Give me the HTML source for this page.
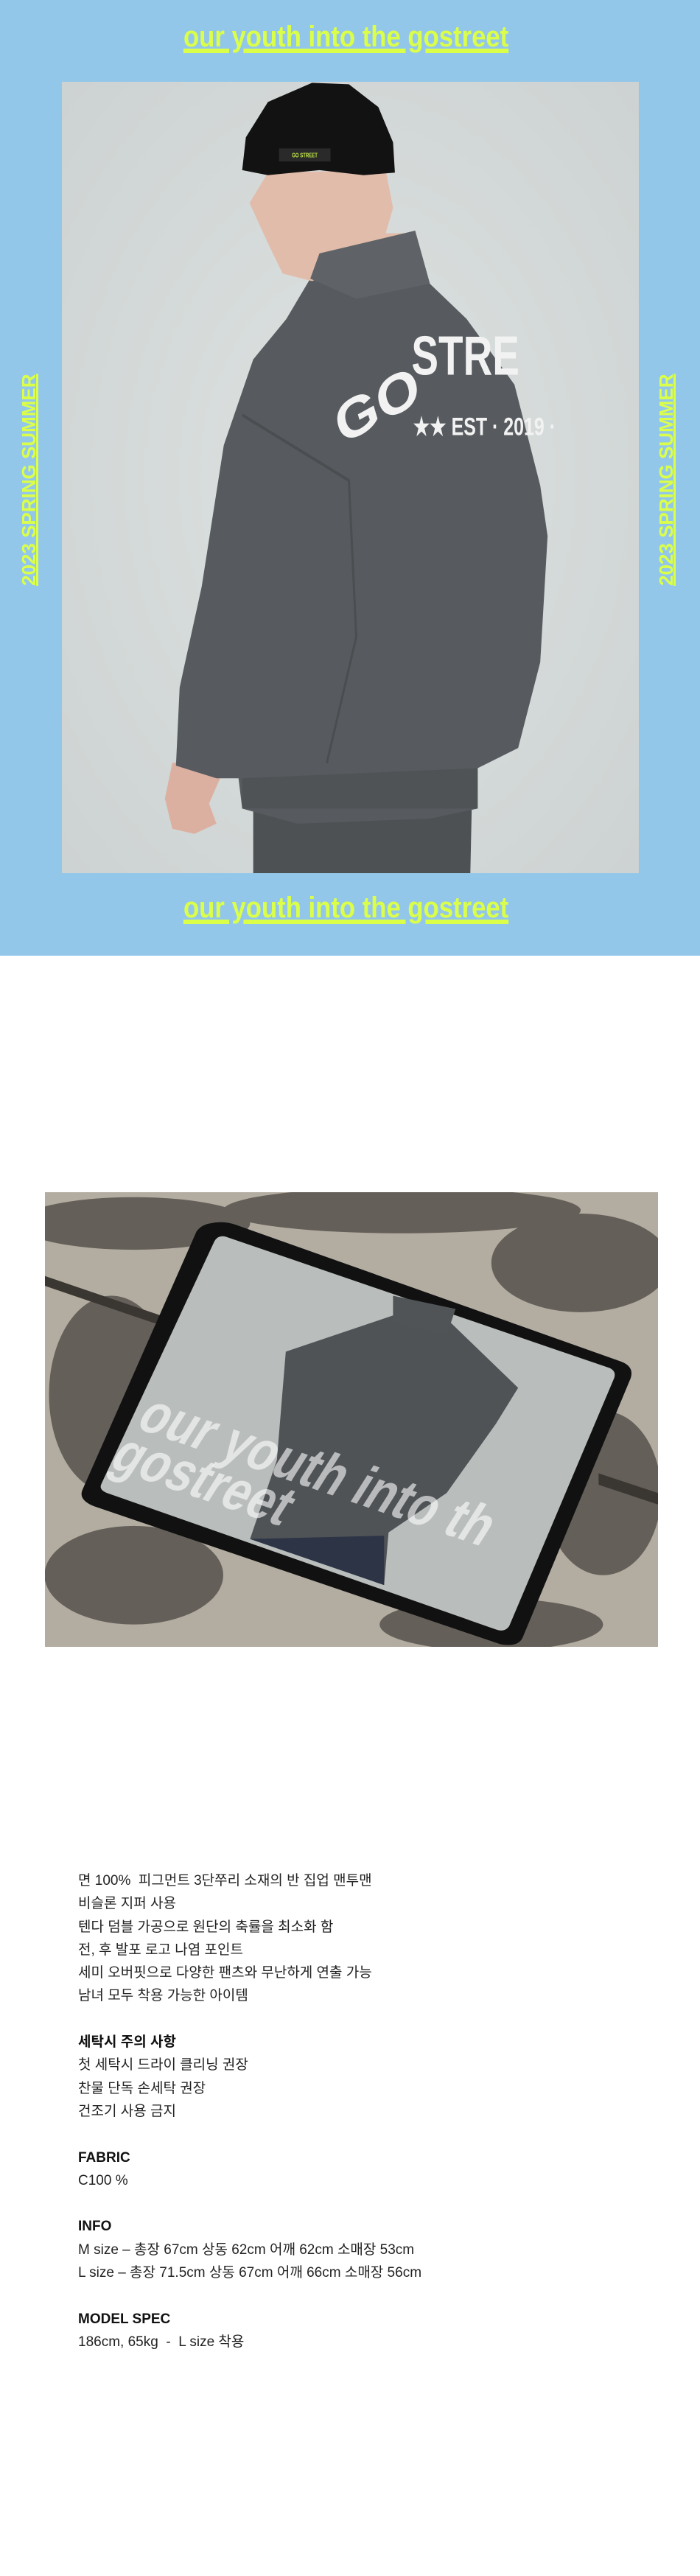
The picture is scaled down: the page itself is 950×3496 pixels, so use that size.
<!DOCTYPE html>
<html><head><meta charset="utf-8">
<style>
*{margin:0;padding:0;box-sizing:border-box}
html,body{width:950px;height:3496px;background:#fff;overflow:hidden;position:relative;font-family:"Liberation Sans","Noto Sans CJK KR",sans-serif}
.blue{position:absolute;left:0;top:0;width:950px;height:1297px;background:#93c7ea}
.slogan{position:absolute;left:249px;font-family:"Liberation Sans",sans-serif;font-weight:bold;font-size:40px;line-height:40px;color:#dbff48;white-space:nowrap;text-decoration:underline;text-decoration-thickness:6px;text-underline-offset:3px;transform-origin:0 0;transform:scaleX(0.867)}
.side{position:absolute;font-weight:bold;font-size:26px;line-height:26px;color:#dbff48;white-space:nowrap;text-decoration:underline;text-decoration-thickness:3px;text-underline-offset:1px;transform-origin:0 0;transform:rotate(-90deg)}
.photo{position:absolute;left:84px;top:111px;width:783px;height:1074px;background:#d3d8d8}
.tab{position:absolute;left:61px;top:1618px;width:832px;height:617px}
.txt{position:absolute;left:106px;top:2537px;font-size:19px;line-height:31.3px;color:#222;white-space:pre}
.txt b{font-weight:bold;color:#111}
</style></head><body>
<div class="blue"></div>
<div class="slogan" style="top:30px">our youth into the gostreet</div>
<div class="slogan" style="top:1212px">our youth into the gostreet</div>
<div class="side" style="left:26px;top:795px">2023 SPRING SUMMER</div>
<div class="side" style="left:891px;top:795px">2023 SPRING SUMMER</div>

<div class="photo">
<svg width="783" height="1074" viewBox="0 0 1568 1568" preserveAspectRatio="none">
<defs><radialGradient id="bg" cx="0.5" cy="0.5" r="0.7"><stop offset="0" stop-color="#dde2e1"/><stop offset="1" stop-color="#cdd2d2"/></radialGradient></defs>
<rect width="1568" height="1568" fill="url(#bg)"/>
<path d="M300 1350 L280 1420 L300 1480 L360 1490 L420 1470 L400 1430 L430 1380 L360 1340Z" fill="#dcb0a0"/>
<path d="M520 1400 L1115 1400 L1110 1568 L520 1568Z" fill="#4d5154"/>
<path d="M675 390 L960 295 L1000 400 L1100 470 L1230 600 L1300 800 L1320 900 L1300 1150 L1240 1320 L1130 1360 L1130 1440 L1000 1460 L640 1470 L490 1440 L480 1380 L420 1380 L310 1355 L320 1200 L380 1000 L440 720 L520 550 L610 470Z" fill="#575b5f"/>
<path d="M490 660 L780 790 L800 1100 L720 1350" fill="none" stroke="#4a4e51" stroke-width="6"/>
<path d="M490 1380 L1130 1360 L1130 1440 L490 1440Z" fill="#4f5356"/>
<path d="M560 180 L880 175 L900 250 L880 300 L960 300 L800 360 L680 395 L600 380 L560 320 L510 240Z" fill="#e2bcaa"/>
<path d="M960 295 L1000 400 L800 430 L675 390 L700 340Z" fill="#5f6367"/>
<path d="M490 175 L500 110 L560 40 L680 2 L780 5 L860 50 L900 120 L905 180 L820 185 L700 175 L560 185Z" fill="#121212"/>
<rect x="590" y="132" width="140" height="26" fill="#2a2a2a"/>
<text x="660" y="150" font-size="12" font-family="Liberation Sans" font-weight="bold" fill="#c8f048" text-anchor="middle">GO STREET</text>
<text x="0" y="0" font-family="Liberation Sans" font-weight="bold" font-size="110" fill="#f2f2f2" transform="translate(760 720) rotate(-22) scale(1.4 1)">GO</text>
<text x="950" y="580" font-family="Liberation Sans" font-weight="bold" font-size="110" fill="#f2f2f2">STRE</text>
<text x="955" y="700" font-family="Liberation Sans" font-weight="bold" font-size="50" fill="#f2f2f2">★★ EST · 2019 ·</text>
</svg>
</div>

<div class="tab">
<svg width="832" height="617" viewBox="101 85 1372 1383" preserveAspectRatio="none">
<rect x="101" y="85" width="1372" height="1383" fill="#b3aca1"/>
<g fill="#4a4641" opacity="0.75">
<ellipse cx="300" cy="180" rx="260" ry="80"/>
<ellipse cx="900" cy="140" rx="400" ry="70"/>
<ellipse cx="1300" cy="300" rx="200" ry="150"/>
<ellipse cx="250" cy="700" rx="140" ry="300"/>
<ellipse cx="1350" cy="1000" rx="130" ry="250"/>
<ellipse cx="300" cy="1250" rx="200" ry="150"/>
<ellipse cx="1100" cy="1400" rx="250" ry="80"/>
</g>
<path d="M101 340 L360 460 L360 490 L101 370Z" fill="#3a3631"/>
<path d="M1340 940 L1473 1000 L1473 1035 L1340 975Z" fill="#3a3631"/>
<path d="M470 180 Q500 170 530 185 L1390 600 Q1420 615 1412 650 L1170 1440 Q1160 1470 1120 1460 L210 1040 Q175 1020 185 990 L440 205 Q450 185 470 180Z" fill="#111"/>
<path d="M505 220 L1365 620 Q1380 630 1375 650 L1140 1405 Q1130 1425 1110 1415 L240 1000 Q220 990 228 970 L480 235 Q488 215 505 220Z" fill="#b9bdbc"/>
<path d="M640 570 L880 460 L1000 470 L1160 680 L1110 790 L1000 1000 L870 1120 L860 1280 L560 1140 L620 900Z" fill="#4f5356"/>
<path d="M860 1130 L560 1140 L860 1280Z" fill="#2c3446"/>
<path d="M880 400 L1020 440 L1000 520 L880 480Z" fill="#505457"/>
<text font-family="Liberation Sans" font-weight="bold" font-size="120" fill="#fff" fill-opacity="0.6" transform="translate(300 800) rotate(25) scale(0.9 1.4)">our youth into th</text>
<text font-family="Liberation Sans" font-weight="bold" font-size="120" fill="#fff" fill-opacity="0.6" transform="translate(240 920) rotate(25) scale(0.9 1.4)">gostreet</text>
</svg>
</div>

<div class="txt">면 100%  피그먼트 3단쭈리 소재의 반 집업 맨투맨
비슬론 지퍼 사용
텐다 덤블 가공으로 원단의 축률을 최소화 함
전, 후 발포 로고 나염 포인트
세미 오버핏으로 다양한 팬츠와 무난하게 연출 가능
남녀 모두 착용 가능한 아이템

<b>세탁시 주의 사항</b>
첫 세탁시 드라이 클리닝 권장
찬물 단독 손세탁 권장
건조기 사용 금지

<b>FABRIC</b>
C100 %

<b>INFO</b>
M size – 총장 67cm 상동 62cm 어깨 62cm 소매장 53cm
L size – 총장 71.5cm 상동 67cm 어깨 66cm 소매장 56cm

<b>MODEL SPEC</b>
186cm, 65kg  -  L size 착용</div>
</body></html>
